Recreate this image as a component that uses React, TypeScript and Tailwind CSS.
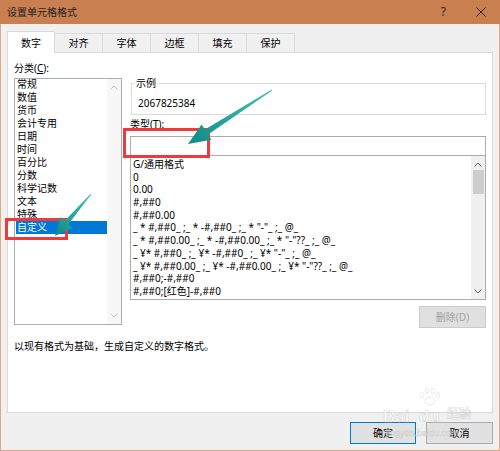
const categories = ['常规', '数值', '货币', '会计专用', '日期', '时间', '百分比', '分数', '科学记数', '文本', '特殊', '自定义']

const formats = [
  'G/通用格式',
  '0',
  '0.00',
  '#,##0',
  '#,##0.00',
  '_ * #,##0_ ;_ * -#,##0_ ;_ * "-"_ ;_ @_',
  '_ * #,##0.00_ ;_ * -#,##0.00_ ;_ * "-"??_ ;_ @_',
  '_ ¥* #,##0_ ;_ ¥* -#,##0_ ;_ ¥* "-"_ ;_ @_',
  '_ ¥* #,##0.00_ ;_ ¥* -#,##0.00_ ;_ ¥* "-"??_ ;_ @_',
  '#,##0;-#,##0',
  '#,##0;[红色]-#,##0',
]

const tabs = ['数字', '对齐', '字体', '边框', '填充', '保护']

function Chevron({ up, color }: { up?: boolean; color: string }) {
  return (
    <svg width="8" height="5" viewBox="0 0 8 5">
      <path d={up ? 'M0.5 4.5 L4 1 L7.5 4.5' : 'M0.5 0.5 L4 4 L7.5 0.5'} fill="none" stroke={color} strokeWidth="1" />
    </svg>
  )
}

export default function App() {
  return (
    <div className="relative w-[500px] h-[451px] flex flex-col overflow-hidden bg-[#f0f0f0] text-[10px] text-black font-['Noto_Sans','Noto_Sans_CJK_SC',sans-serif]">
      {/* title bar */}
      <div className="h-[24px] shrink-0 bg-[#c97f4f] flex items-center pl-[7px] pr-[14px]">
        <span className="flex-1 text-[#1e1e1e] leading-none">设置单元格格式</span>
        <span className="text-[12px] text-[#2a2a2a] mr-[30px] leading-none">?</span>
        <svg width="10" height="10" viewBox="0 0 10 10">
          <path d="M0.5 0.5 L9.5 9.5 M9.5 0.5 L0.5 9.5" stroke="#2a2a2a" strokeWidth="1" />
        </svg>
      </div>

      <div className="flex-1 flex flex-col border-x border-b border-[#dfa883] px-[6px] pt-[7px]">
        {/* tabs */}
        <div className="h-[22px] flex items-start relative z-10">
          {tabs.map((t, i) =>
            i === 0 ? (
              <div key={t} className="w-[48px] h-[22px] bg-white border-x border-t border-[#d9d9d9] flex items-center justify-center pt-[1px]">
                {t}
              </div>
            ) : (
              <div key={t} className="w-[49px] -ml-px mt-[2px] h-[19px] bg-[#f0f0f0] border-x border-t border-[#d9d9d9] flex items-center justify-center">
                {t}
              </div>
            )
          )}
        </div>

        {/* panel */}
        <div className="-mt-px h-[361px] shrink-0 bg-white border border-[#d9d9d9] px-[6px] pt-[7px] flex flex-col">
          <div className="flex gap-[8px]">
            {/* left column */}
            <div className="w-[108px] flex flex-col">
              <div className="h-[16px] leading-[16px]">
                分类(<u>C</u>):
              </div>
              <div className="mt-[2px] h-[247px] border border-[#abadb3] flex">
                <div className="flex-1 flex flex-col pl-px -mt-px">
                  {categories.map((c) => (
                    <div
                      key={c}
                      className={
                        c === '自定义'
                          ? 'h-[13px] leading-[13px] bg-[#0078d7] text-white pl-[1px]'
                          : 'h-[13px] leading-[13px] pl-[1px]'
                      }
                    >
                      {c}
                    </div>
                  ))}
                </div>
                <div className="w-[14px] bg-[#f7f7f7] flex flex-col items-center justify-between py-[6px]">
                  <Chevron up color="#c2c2c2" />
                  <Chevron color="#c2c2c2" />
                </div>
              </div>
            </div>

            {/* right column */}
            <div className="w-[356px] flex flex-col pt-[23px]">
              <div className="relative ml-px h-[32px] border border-[#dcdcdc] pl-[6px] pt-[12px] leading-[14px]">
                <span className="absolute -top-[8px] left-[3px] bg-white px-px leading-[14px]">示例</span>
                2067825384
              </div>
              <div className="mt-[2px] h-[14px] leading-[14px]">
                类型(<u>T</u>):
              </div>
              <div className="mt-[5px] h-[20px] border border-[#acacac]" />
              <div className="h-[144px] border border-[#acacac] border-t-0 flex">
                <div className="flex-1 pl-[2px] pt-[2px] overflow-hidden">
                  {formats.map((f) => (
                    <div key={f} className="h-[12.7px] leading-[12.7px] whitespace-pre">
                      {f}
                    </div>
                  ))}
                </div>
                <div className="w-[14px] bg-[#f0f0f0] flex flex-col items-center pt-[6px] pb-[5px]">
                  <Chevron up color="#606060" />
                  <div className="mt-[3px] w-[11px] h-[24px] bg-[#cdcdcd]" />
                  <div className="flex-1" />
                  <Chevron color="#606060" />
                </div>
              </div>
              <div className="mt-[6px] self-end w-[67px] h-[22px] bg-[#e0e0e0] border border-[#cccccc] text-[#a3a3a3] flex items-center justify-center">
                删除(D)
              </div>
            </div>
          </div>
          <div className="mt-[11px] leading-[14px]">以现有格式为基础，生成自定义的数字格式。</div>
        </div>

        {/* buttons */}
        <div className="mt-[9px] flex justify-end gap-[10px]">
          <div className="w-[66px] h-[22px] bg-[#e1e1e1] border border-[#0078d7] flex items-center justify-center">确定</div>
          <div className="w-[67px] h-[22px] bg-[#e1e1e1] border border-[#adadad] flex items-center justify-center">取消</div>
        </div>
      </div>

      {/* annotations */}
      <svg className="absolute inset-0 pointer-events-none" width="500" height="451" viewBox="0 0 500 451">
        <defs>
          <linearGradient id="tealA" x1="272" y1="90" x2="188" y2="144" gradientUnits="userSpaceOnUse">
            <stop offset="0" stopColor="#44c4b8" />
            <stop offset="1" stopColor="#0f8a86" />
          </linearGradient>
          <linearGradient id="tealB" x1="91" y1="194" x2="55" y2="236" gradientUnits="userSpaceOnUse">
            <stop offset="0" stopColor="#44c4b8" />
            <stop offset="1" stopColor="#0f8a86" />
          </linearGradient>
        </defs>
        <rect x="124.5" y="129.5" width="84" height="27" fill="none" stroke="#ee3a3a" strokeWidth="3" />
        <rect x="6.5" y="219.5" width="60" height="19" fill="none" stroke="#ee3a3a" strokeWidth="3" />
        <polygon
          points="271.7,89.6 204.9,129.6 201.6,124.5 188,144 211.4,139.7 208.1,134.6 272.3,90.4"
          fill="url(#tealA)"
        />
        <polygon
          points="90.6,193.7 64.8,220.7 60.6,217.1 55,236 72.8,227.5 68.6,223.9 91.4,194.3"
          fill="url(#tealB)"
        />
        {/* watermark */}
        <g opacity="0.6" fill="#ffffff" stroke="#c8c8c8" strokeWidth="0.6" fontFamily="'Liberation Sans', sans-serif" fontWeight="bold">
          <text x="383" y="422" fontSize="17">Bai</text>
          <text x="419" y="422" fontSize="17">du</text>
          <text x="447" y="418" fontSize="12" fontFamily="'Noto Sans CJK SC', sans-serif">经验</text>
          <ellipse cx="430" cy="401" rx="5" ry="4" />
          <ellipse cx="422" cy="395" rx="2" ry="2.5" />
          <ellipse cx="427" cy="391" rx="2" ry="2.5" />
          <ellipse cx="433" cy="391" rx="2" ry="2.5" />
          <ellipse cx="438" cy="395" rx="2" ry="2.5" />
          <text x="386" y="436" fontSize="9" fontWeight="normal">jingyan.baidu.com</text>
        </g>
      </svg>
    </div>
  )
}
